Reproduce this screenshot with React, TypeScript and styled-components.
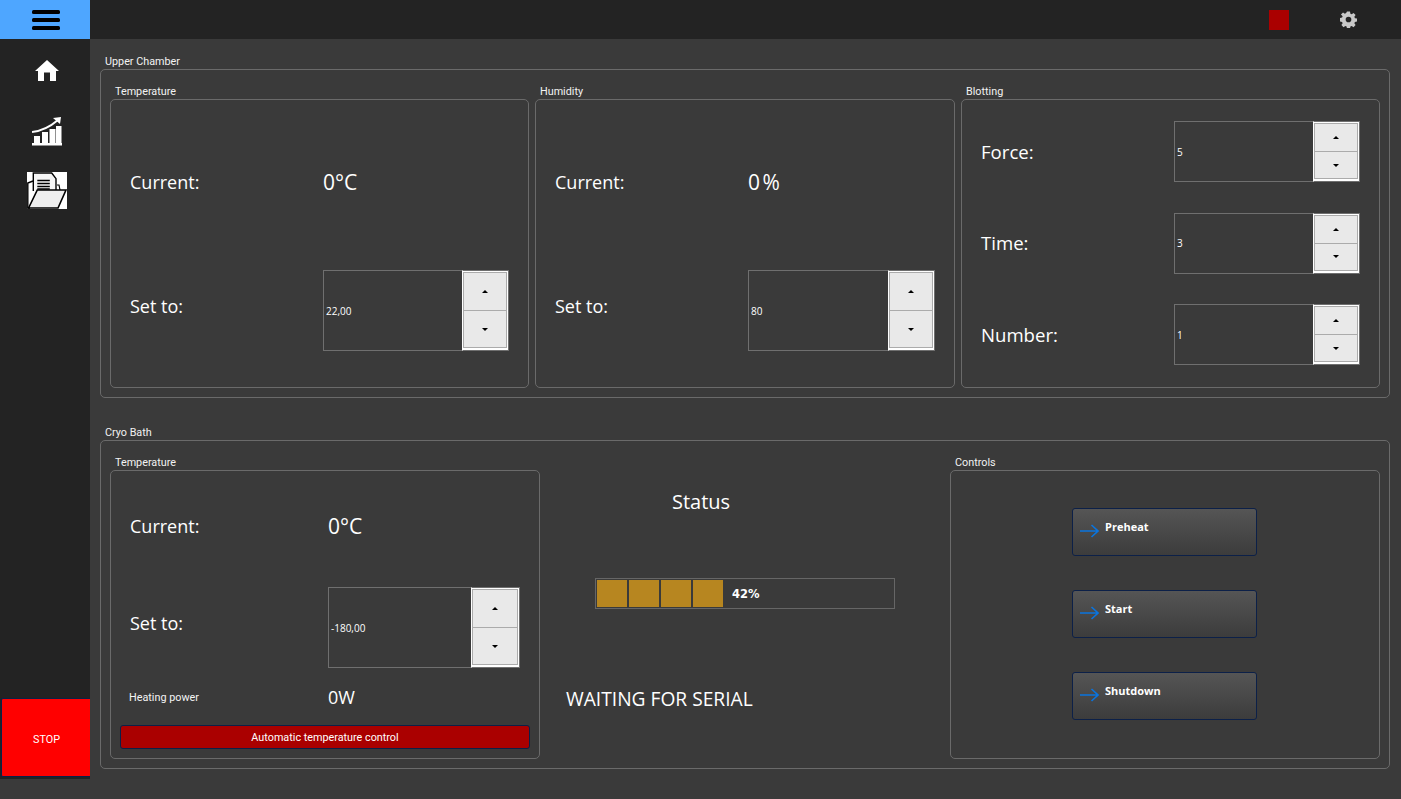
import React from 'react';
import styled, { createGlobalStyle } from 'styled-components';

const Global = createGlobalStyle`
  html, body { margin: 0; padding: 0; height: 100%; background: #3a3a3a; }
  #root { height: 100%; }
  * { box-sizing: border-box; }
`;

const Page = styled.div`
  width: 1401px; height: 799px; overflow: hidden;
  display: grid; grid-template-columns: 90px 1fr; grid-template-rows: 39px 1fr;
  background: #3a3a3a; color: #fff;
  font-family: "Open Sans", "Noto Sans", sans-serif;
`;
const MenuButton = styled.div`
  background: #4ea6ff; display: flex; align-items: center; justify-content: center; padding-left: 2px;
`;
const TopBar = styled.div`
  background: #232323; display: flex; align-items: center; justify-content: flex-end;
  padding-right: 44px; gap: 51px;
`;
const Alarm = styled.div` width: 20px; height: 20px; background: #aa0000; `;
const Sidebar = styled.nav`
  background: #232323; height: 740px; display: flex; flex-direction: column; align-items: center;
  padding: 0 0 2px 4px;
`;
const NavIcon = styled.div<{ $h: number }>`
  height: ${p => p.$h}px; display: flex; align-items: center; justify-content: center; flex: none;
`;
const Spacer = styled.div` flex: 1; `;
const Stop = styled.div`
  align-self: flex-end; width: 89px; height: 79px; background: #ff0000; border: 1px solid #0c2048; border-right: 0;
  border-radius: 2px 0 0 2px; display: flex; align-items: center; justify-content: center;
  font-family: Roboto, sans-serif; font-size: 10.8px; padding: 3px 0 0 1px;
`;
const Main = styled.main`
  padding: 15px 11px 0 10px; display: flex; flex-direction: column; gap: 27px;
`;
const Group = styled.section` display: flex; flex-direction: column; `;
const Title = styled.div`
  font-family: Roboto, sans-serif; font-size: 10.8px; line-height: 16px; height: 15px; padding-left: 5px; color: #f2f2f2;
`;
const Outer = styled.div`
  height: 329px; border: 1px solid #6a6a6a; border-radius: 5px; padding: 14px 9px 9px; display: grid;
`;
const Inner = styled.div`
  flex: 1; min-height: 0; border: 1px solid #6a6a6a; border-radius: 5px; display: flex; flex-direction: column;
`;
const Col = styled.div` display: flex; flex-direction: column; min-width: 0; `;
const Big = styled.span<{ $lift?: number }>`
  font-size: 18px; color: #fff; line-height: 24px;
  margin-bottom: ${p => p.$lift ?? 0}px;
`;
const BlotLabel = styled.span`
  font-size: 18.6px; color: #fff; line-height: 24px;
`;
const Value = styled.span<{ $size: number; $track?: number }>`
  font-size: ${p => p.$size}px; color: #fff; line-height: 24px;
  letter-spacing: ${p => p.$track ?? 0}px;
`;
const Row = styled.div<{ $label: number }>`
  display: grid; grid-template-columns: ${p => p.$label}px 1fr; align-items: center;
`;
const ReadRow = styled(Row)<{ $h?: number }>`
  ${p => (p.$h ? `height: ${p.$h}px; flex: none;` : 'flex: 1;')}
`;
const TwoRows = styled(Inner)` padding: 0 19px 36px; `;
const SetRow = styled(Row)` margin-top: 6px; `;
const ThreeRows = styled(Inner)` padding: 21px 19px 22px; justify-content: space-between; `;
const Spin = styled.div<{ $h: number; $btn?: number }>`
  height: ${p => p.$h}px; display: grid; grid-template-columns: 1fr ${p => p.$btn ?? 47}px;
`;
const SpinValue = styled.div`
  border: 1px solid #6f6f6f; border-right: 0; display: flex; align-items: center; padding-left: 2px;
  font-size: 10px; color: #fff;
`;
const SpinButtons = styled.div`
  background: #fff; border: 1px solid #6f6f6f; border-left: 1px solid #fff;
  display: grid; grid-template-rows: 1fr 1fr; padding: 1px 1px 2px 0;
`;
const SpinBtn = styled.div<{ $up?: boolean }>`
  background: #e9e9e9; border: 1px solid #ababab; ${p => (p.$up ? 'border-bottom: 0;' : '')}
  display: flex; align-items: center; justify-content: center;
`;
const Arrow = styled.i<{ $up?: boolean }>`
  width: 0; height: 0; border-left: 3px solid transparent; border-right: 3px solid transparent;
  ${p => (p.$up ? 'border-bottom: 3px solid #000;' : 'border-top: 3px solid #000;')}
`;
const CryoOuter = styled(Outer)` grid-template-columns: 430px 1fr 430px; `;
const UpperOuter = styled(Outer)` grid-template-columns: 419px 420px 419px; gap: 6px; `;
const CryoTemp = styled(Inner)` padding: 0 9px 9px; `;
const Indented = styled.div` padding: 0 10px; display: flex; flex-direction: column; flex: 1; `;
const HeatRow = styled(Row)` flex: 1; `;
const Small = styled.span`
  font-family: Roboto, sans-serif; font-size: 10.8px; color: #f4f4f4; margin: 2px 0 0 -1px;
`;
const AutoBtn = styled.div`
  height: 24px; background: #aa0000; border: 1px solid #0c2048; border-radius: 3px;
  display: flex; align-items: center; justify-content: center;
  font-family: Roboto, sans-serif; font-size: 10.8px; color: #fff;
`;
const Middle = styled.div` display: flex; flex-direction: column; padding-top: 33px; `;
const StatusTitle = styled.div`
  font-size: 20px; line-height: 27px; padding-left: 132px;
`;
const Progress = styled.div`
  margin: 63px 55px 0; height: 31px; border: 1px solid #666; padding: 1px; display: flex; gap: 2px; align-items: stretch;
`;
const Chunk = styled.div` width: 30px; background: #b78620; `;
const ProgressText = styled.span`
  margin-left: 7px; align-self: center; font-family: "DejaVu Sans", sans-serif; font-size: 11.5px; font-weight: 700;
`;
const Waiting = styled.div`
  margin-top: 78px; padding-left: 26px; font-size: 19.2px; line-height: 24px;
`;
const Controls = styled(Inner)`
  align-items: center; justify-content: center; gap: 34px; padding: 0 1px 2px 0;
`;
const Action = styled.div`
  width: 185px; height: 48px; border: 1px solid #0c2048; border-radius: 3px;
  background: linear-gradient(#555555, #3c3c3c); display: flex; align-items: flex-start; gap: 6px;
  padding: 10px 0 0 7px; font-size: 11px; font-weight: 700; line-height: 15px;
`;
const ActionIcon = styled.svg` margin-top: 5px; flex: none; `;

const Hamburger = () => (
  <svg width="30" height="22" viewBox="0 0 30 22" fill="#000">
    <rect x="1" y="1" width="28" height="4" rx="1.5" />
    <rect x="1" y="9" width="28" height="4" rx="1.5" />
    <rect x="1" y="17" width="28" height="4" rx="1.5" />
  </svg>
);
const Home = () => (
  <svg width="24" height="21" viewBox="0 0 24 21" fill="#fff">
    <path d="M12 0 L24 11 H21 V21 H15 V12.5 H9 V21 H3 V11 H0 Z" />
  </svg>
);
const Chart = () => (
  <svg width="30" height="29" viewBox="0 0 30 29" fill="#fff">
    <rect x="0" y="26" width="30" height="2.5" />
    <rect x="2" y="19" width="6" height="7" />
    <rect x="10" y="15" width="6" height="11" />
    <rect x="17.5" y="12" width="6" height="14" />
    <rect x="24" y="9" width="5.5" height="17" />
    <path d="M0 15 C10 14 19 9 26 3" stroke="#fff" strokeWidth="2" fill="none" />
    <path d="M21 1 L29 0 L28 7 Z" />
  </svg>
);
const Folder = () => (
  <svg width="40" height="37" viewBox="0 0 40 37">
    <rect width="40" height="37" fill="#fff" />
    <path d="M6 9 L0.8 11 V36 H3" fill="none" stroke="#000" strokeWidth="1.4" />
    <path d="M6.3 19 V1 H24.7 L29 6.7 V18" fill="#f6f6f6" stroke="#000" strokeWidth="1.4" />
    <path d="M10.3 8.5h12.5M10.3 11.5h12.5M10.3 14.5h12.5M10.3 17h12.5" stroke="#000" strokeWidth="1.6" />
    <path d="M30 13 L32 13 L33 18" fill="none" stroke="#000" strokeWidth="1.2" />
    <path d="M10.3 18 H39 L31 36 H1.6 Z" fill="#efefef" stroke="#000" strokeWidth="1.6" />
  </svg>
);
const Gear = () => (
  <svg width="17" height="17" viewBox="0 0 18 18" fill="#c8c8c8">
    <path fillRule="evenodd" d="M7.4 0.5h3.2l.4 2.3 1.4.6 1.9-1.3 2.2 2.2-1.3 1.9.6 1.4 2.3.4v3.2l-2.3.4-.6 1.4 1.3 1.9-2.2 2.2-1.9-1.3-1.4.6-.4 2.3H7.4l-.4-2.3-1.4-.6-1.9 1.3-2.2-2.2 1.3-1.9-.6-1.4-2.3-.4V7.4l2.3-.4.6-1.4L1 3.7l2.2-2.2 1.9 1.3 1.4-.6zM9 6a3 3 0 1 0 0 6 3 3 0 0 0 0-6z" />
  </svg>
);
const BlueArrow = () => (
  <ActionIcon width="19" height="14" viewBox="0 0 19 14" fill="none" stroke="#0a74de" strokeWidth="1.6">
    <path d="M0 7 H18 M11.5 1 L18 7 L11.5 13" />
  </ActionIcon>
);

const SpinBox = ({ value, h, btn }: { value: string; h: number; btn?: number }) => (
  <Spin $h={h} $btn={btn}>
    <SpinValue>{value}</SpinValue>
    <SpinButtons>
      <SpinBtn $up><Arrow $up /></SpinBtn>
      <SpinBtn><Arrow /></SpinBtn>
    </SpinButtons>
  </Spin>
);

const Measure = ({ title, current, track, set }: { title: string; current: string; track: number; set: string }) => (
  <Col>
    <Title>{title}</Title>
    <TwoRows>
      <ReadRow $label={193}><Big>Current:</Big><Value $size={21} $track={track}>{current}</Value></ReadRow>
      <SetRow $label={193}><Big $lift={10}>Set to:</Big><SpinBox value={set} h={81} /></SetRow>
    </TwoRows>
  </Col>
);

export default function App() {
  return (
    <Page>
      <Global />
      <MenuButton><Hamburger /></MenuButton>
      <TopBar><Alarm /><Gear /></TopBar>
      <Sidebar>
        <NavIcon $h={63}><Home /></NavIcon>
        <NavIcon $h={58}><Chart /></NavIcon>
        <NavIcon $h={61}><Folder /></NavIcon>
        <Spacer />
        <Stop>STOP</Stop>
      </Sidebar>
      <Main>
        <Group>
          <Title>Upper Chamber</Title>
          <UpperOuter>
            <Measure title="Temperature" current="0°C" track={0} set="22,00" />
            <Measure title="Humidity" current="0%" track={2.5} set="80" />
            <Col>
              <Title>Blotting</Title>
              <ThreeRows>
                <Row $label={193}><BlotLabel>Force:</BlotLabel><SpinBox value="5" h={61} /></Row>
                <Row $label={193}><BlotLabel>Time:</BlotLabel><SpinBox value="3" h={61} /></Row>
                <Row $label={193}><BlotLabel>Number:</BlotLabel><SpinBox value="1" h={61} /></Row>
              </ThreeRows>
            </Col>
          </UpperOuter>
        </Group>
        <Group>
          <Title>Cryo Bath</Title>
          <CryoOuter>
            <Col>
              <Title>Temperature</Title>
              <CryoTemp>
                <Indented>
                  <ReadRow $label={198} $h={110}><Big>Current:</Big><Value $size={21}>0°C</Value></ReadRow>
                  <SetRow $label={198}><Big $lift={10}>Set to:</Big><SpinBox value="-180,00" h={81} btn={49} /></SetRow>
                  <HeatRow $label={198}><Small>Heating power</Small><Value $size={18}>0W</Value></HeatRow>
                </Indented>
                <AutoBtn>Automatic temperature control</AutoBtn>
              </CryoTemp>
            </Col>
            <Middle>
              <StatusTitle>Status</StatusTitle>
              <Progress>
                <Chunk /><Chunk /><Chunk /><Chunk />
                <ProgressText>42%</ProgressText>
              </Progress>
              <Waiting>WAITING FOR SERIAL</Waiting>
            </Middle>
            <Col>
              <Title>Controls</Title>
              <Controls>
                <Action><BlueArrow />Preheat</Action>
                <Action><BlueArrow />Start</Action>
                <Action><BlueArrow />Shutdown</Action>
              </Controls>
            </Col>
          </CryoOuter>
        </Group>
      </Main>
    </Page>
  );
}
